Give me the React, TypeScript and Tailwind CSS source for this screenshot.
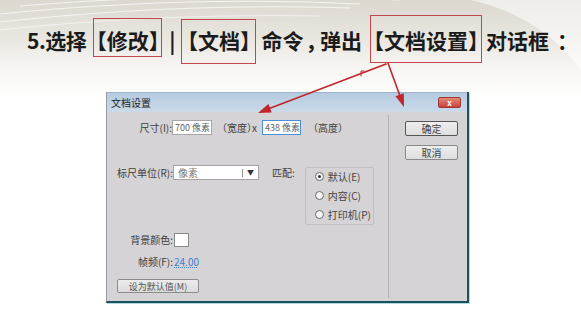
import React from "react";

const dlgFont = "font-['Noto_Sans_CJK_SC',sans-serif]";

function Radio({ label, checked }: { label: string; checked?: boolean }) {
  return (
    <div className="flex items-center h-[15px]">
      <span className="w-[9px] h-[9px] rounded-full border border-[#6a6a6a] bg-[#f4f4f4] flex items-center justify-center">
        {checked && <span className="w-[3px] h-[3px] rounded-full bg-[#333]" />}
      </span>
      <span className="ml-[4px] text-[10px] leading-none text-[#444]">{label}</span>
    </div>
  );
}

function Arrows() {
  return (
    <svg className="absolute inset-0 pointer-events-none" width="581" height="311" viewBox="0 0 581 311">
      <g stroke="#c0262b" strokeWidth="1.6" fill="none" strokeLinecap="round">
        <line x1="386" y1="64" x2="268" y2="109" />
        <line x1="388" y1="63" x2="400" y2="96" />
        <path d="M361 76 L361 71 L364 71" strokeWidth="1" />
      </g>
      <polygon points="258,113 271.7,112.5 268.5,104.1" fill="#c0262b" />
      <polygon points="404,107 403.8,93.3 395.4,96.3" fill="#c0262b" />
    </svg>
  );
}

function Backdrop() {
  return (
    <svg className="absolute inset-0 pointer-events-none" width="581" height="311" viewBox="0 0 581 311">
      <g stroke="#ffffff" strokeOpacity="0.7" fill="none">
        <path d="M0 14 C120 2 240 -2 360 4" strokeWidth="1.2" />
        <path d="M0 22 C110 10 230 4 350 8" strokeWidth="1" />
        <path d="M0 30 C90 20 200 14 320 16" strokeWidth="0.8" />
        <path d="M20 6 C140 -4 260 -6 400 0" strokeWidth="1" />
      </g>
      <path d="M470 0 C520 10 560 40 581 70 L581 0 Z" fill="#ffffff" fillOpacity="0.55" />
    </svg>
  );
}

export default function App() {
  return (
    <div className="relative w-[581px] h-[311px] overflow-hidden bg-[linear-gradient(to_bottom,#dcd8d0_0%,#e9e6e0_12%,#f7f6f3_22%,#ffffff_32%)]">
      <Backdrop />

      {/* Heading */}
      <div className="relative flex items-start pl-[27px] pt-[15px] font-['Noto_Sans_CJK_SC',sans-serif] font-bold text-[21px] leading-[22px] text-[#1b1b1b] [font-feature-settings:'halt'] whitespace-nowrap">
        <span className="mt-[14px] tracking-[-0.5px]">5.选择</span>
        <span className="ml-[7px] mt-[3px] px-[2px] pt-[10px] pb-[5px] border border-[#c3474a]">【修改】</span>
        <span className="ml-[7px] mt-[14px]">|</span>
        <span className="ml-[6px] mt-[4px] px-[5px] pt-[9px] pb-[12px] border border-[#c3474a]">【文档】</span>
        <span className="ml-[5px] mt-[14px]">命令</span>
        <span className="ml-[2px] mt-[14px]">，</span>
        <span className="ml-[4px] mt-[14px]">弹出</span>
        <span className="ml-[8px] px-[2.5px] pt-[13px] pb-[11px] border border-[#c3474a]">【文档设置】</span>
        <span className="ml-[4px] mt-[14px]">对话框</span>
        <span className="ml-[8px] mt-[14px]">：</span>
      </div>

      {/* Dialog */}
      <div
        className={`relative ml-[106px] mt-[28px] w-[363px] border-l border-l-[#9a9aa0] border-r-2 border-r-[#1f4f5d] border-b-2 border-b-[#1f4f5d] shadow-[1px_1px_0_#a9dde2] ${dlgFont}`}
      >
        <div className="h-[20px] flex items-center justify-between pl-[4px] pr-[6px] bg-[linear-gradient(to_bottom,#b5cbe2,#cbd9e8)] border-t border-t-[#9fb3c9]">
          <span className="text-[10px] leading-none text-[#1c1c1c]">文档设置</span>
          <span className="w-[23px] h-[11px] rounded-[2px] bg-[linear-gradient(to_bottom,#e58a78,#c8433a)] border border-[#9a3a33] flex items-center justify-center text-white text-[8px] font-bold leading-none">
            x
          </span>
        </div>

        <div className="h-[189px] flex bg-[#d5d3d5]">
          {/* left column */}
          <div className="w-[281px] flex flex-col text-[10px] leading-none text-[#404040]">
            <div className="mt-[8px] flex items-center h-[15px]">
              <span className="w-[65px] text-right">尺寸(I):</span>
              <span className="w-[40px] h-[15px] bg-white border border-[#a6a6a6] text-[9px] text-[#666] flex items-center pl-[2px]">700 像素</span>
              <span className="ml-[10px] [font-feature-settings:'halt']">（宽度）x</span>
              <span className="ml-[5px] w-[39px] h-[15px] bg-white border border-[#4b8fd8] text-[9px] text-[#666] flex items-center pl-[2px]">438 像素</span>
              <span className="ml-[7px]">（高度）</span>
            </div>

            <div className="mt-[30px] flex items-start">
              <div className="flex items-center h-[15px]">
                <span className="w-[66px] text-right">标尺单位(R):</span>
                <span className="w-[86px] h-[15px] bg-white border border-[#a3a3a3] flex items-center justify-between pl-[4px] pr-[4px] text-[#777]">
                  <span>像素</span>
                  <span className="flex items-center gap-[4px]">
                    <span className="w-px h-[8px] bg-[#999]" />
                    <span className="text-[7px] text-[#333]">▼</span>
                  </span>
                </span>
                <span className="ml-[13px]">匹配:</span>
              </div>
              <div className="ml-[10px] mt-[2px] w-[69px] h-[58px] border border-[#c2c0c2] rounded-[2px] pl-[9px] pt-[1px] flex flex-col gap-[4px]">
                <Radio label="默认(E)" checked />
                <Radio label="内容(C)" />
                <Radio label="打印机(P)" />
              </div>
            </div>

            <div className="mt-[8px] flex items-center h-[14px]">
              <span className="w-[66px] text-right">背景颜色:</span>
              <span className="ml-[1px] w-[15px] h-[14px] bg-white border border-[#8a8a8a]" />
            </div>

            <div className="mt-[8px] flex items-center h-[14px]">
              <span className="w-[66px] text-right">帧频(F):</span>
              <span className="ml-[1px] text-[#3f7fd0] underline decoration-dotted">24.00</span>
            </div>

            <div className="mt-[10px] ml-[10px] w-[82px] h-[14px] bg-[linear-gradient(to_bottom,#ececec,#dcdcdc)] border border-[#8c8c8c] rounded-[2px] flex items-center justify-center text-[9px] text-[#555]">
              设为默认值(M)
            </div>
          </div>

          {/* separator */}
          <div className="w-px my-[3px] bg-[#b2b0b2]" />

          {/* right column */}
          <div className="flex-1 flex flex-col pl-[16px] pt-[9px] gap-[9px]">
            <span className="w-[53px] h-[15px] bg-[linear-gradient(to_bottom,#eeeeee,#dedede)] border border-[#555] rounded-[2px] flex items-center justify-center text-[10px] leading-none text-[#444]">
              确定
            </span>
            <span className="w-[53px] h-[15px] bg-[linear-gradient(to_bottom,#eeeeee,#dedede)] border border-[#8a8a8a] rounded-[2px] flex items-center justify-center text-[10px] leading-none text-[#444]">
              取消
            </span>
          </div>
        </div>
      </div>

      <Arrows />
    </div>
  );
}
